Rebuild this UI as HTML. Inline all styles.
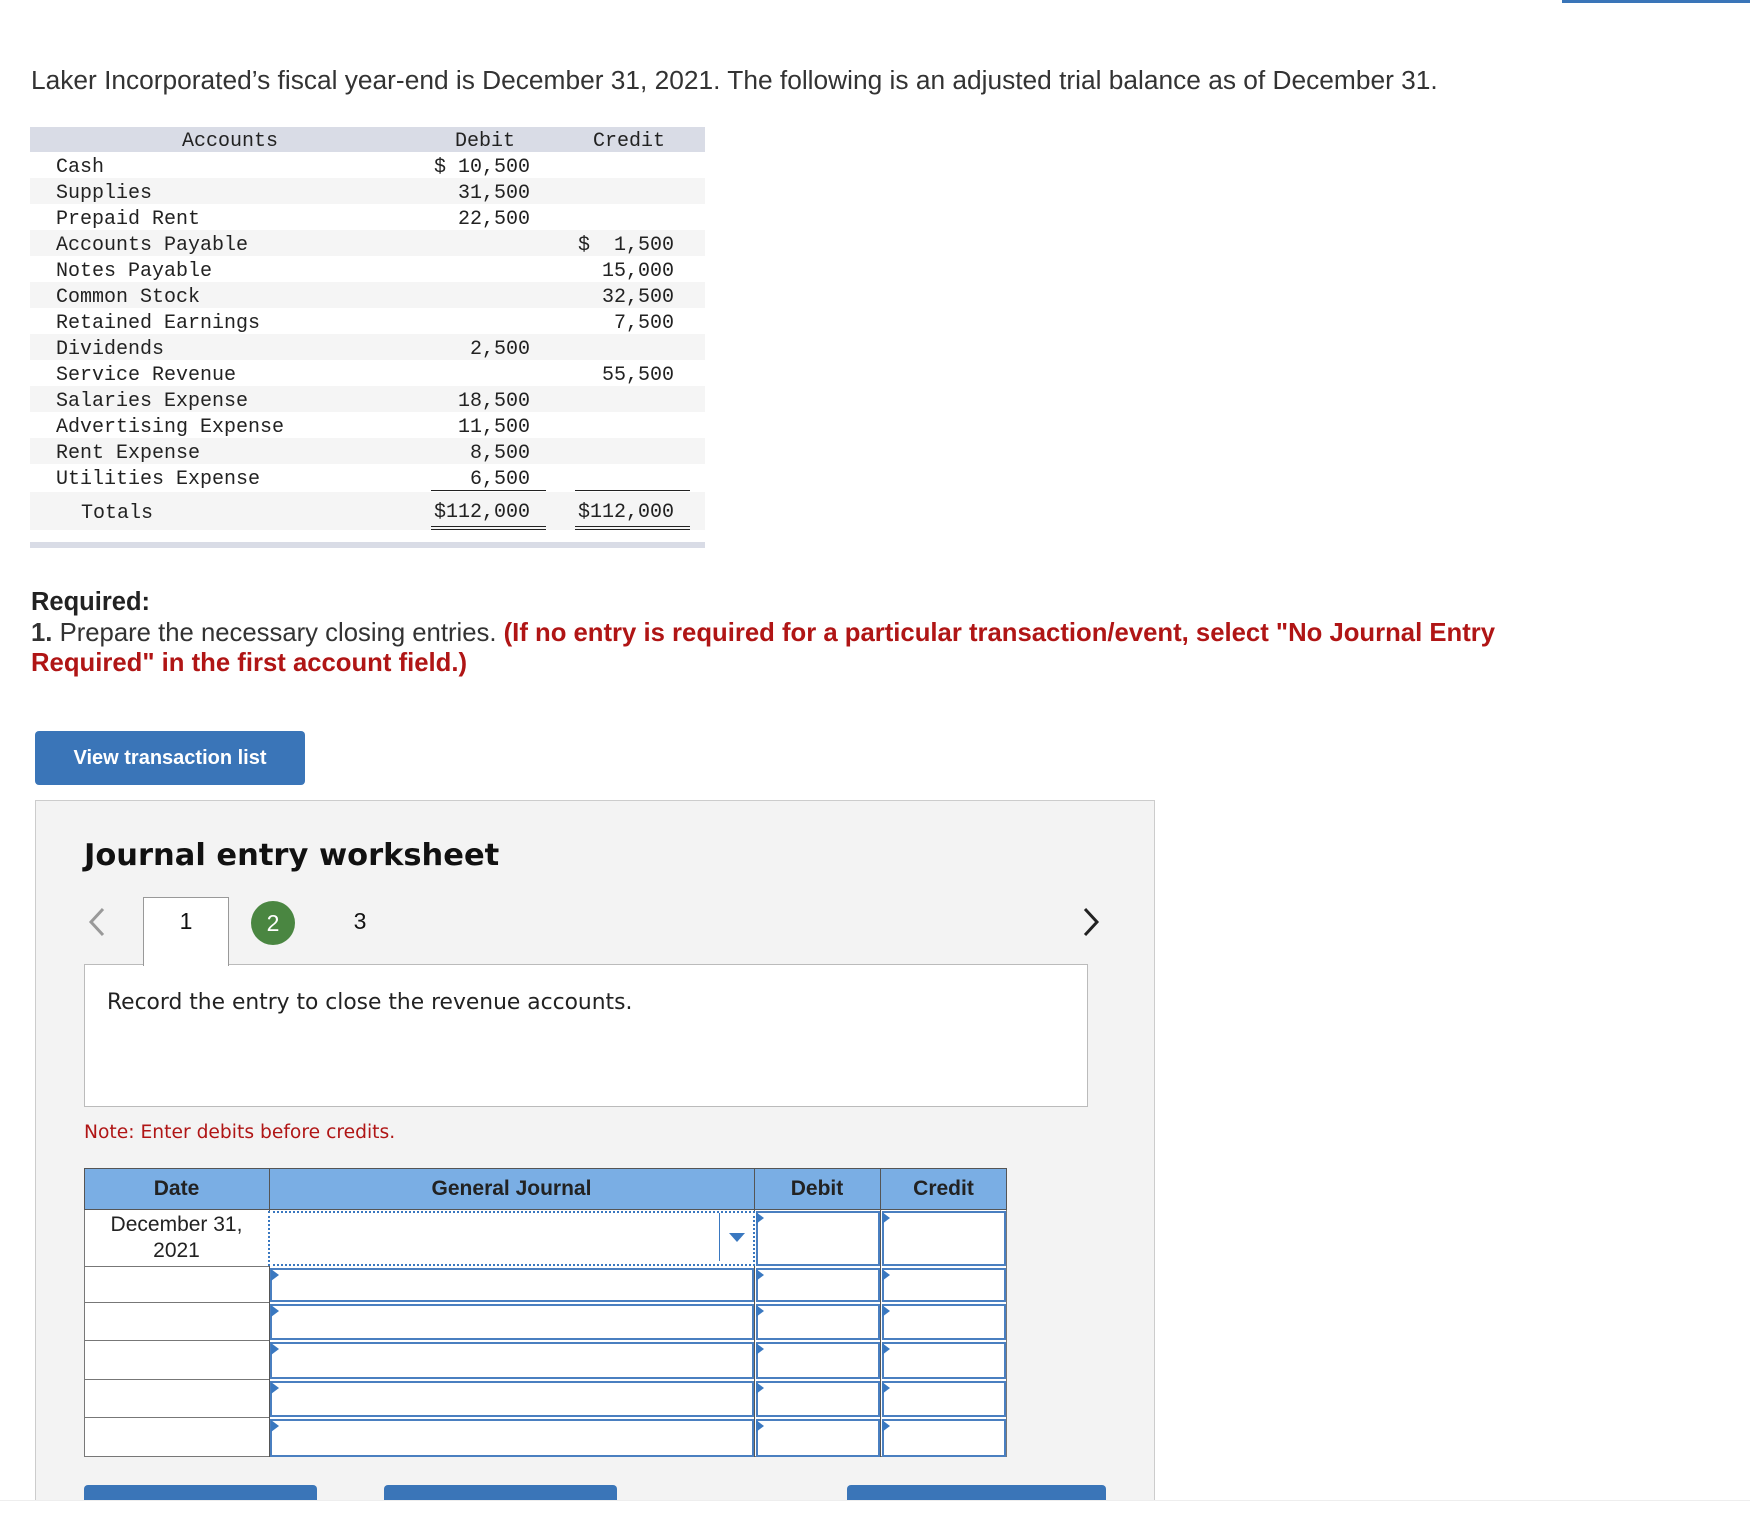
<!DOCTYPE html>
<html><head><meta charset="utf-8"><style>
*{margin:0;padding:0;box-sizing:border-box}
body{width:1750px;height:1516px;background:#fff;position:relative;font-family:"Liberation Sans",sans-serif;color:#222;overflow:hidden}
.a{position:absolute}
.mono{font-family:"Liberation Mono","DejaVu Sans Mono",monospace;font-size:20px;color:#222;white-space:pre}
.row{position:absolute;left:30px;width:675px;height:26px}
.sh{background:#f5f5f5}
.cell{position:absolute;border:2px solid #4a7fc0;background:#fff}
.tri{position:absolute;width:0;height:0;border-top:6px solid transparent;border-bottom:6px solid transparent;border-left:8px solid #3a78c0}
</style></head><body>
<div class="a" style="left:1562px;top:0;width:188px;height:3px;background:#3a75b8"></div>
<div class="a" style="left:31px;top:65px;font-size:26.3px;color:#333;white-space:nowrap">Laker Incorporated’s fiscal year-end is December 31, 2021. The following is an adjusted trial balance as of December 31.</div>

<div class="a" style="left:30px;top:127px;width:675px;height:25px;background:#d9dce6"></div>
<div class="a mono" style="left:182px;top:130px">Accounts</div>
<div class="a mono" style="left:455px;top:130px">Debit</div>
<div class="a mono" style="left:593px;top:130px">Credit</div>
<div class="row sh" style="top:178px"></div>
<div class="row sh" style="top:230px"></div>
<div class="row sh" style="top:282px"></div>
<div class="row sh" style="top:334px"></div>
<div class="row sh" style="top:386px"></div>
<div class="row sh" style="top:438px"></div>
<div class="row sh" style="top:492px;height:38px"></div>
<div class="a mono" style="left:56px;top:155px;line-height:26px">Cash
Supplies
Prepaid Rent
Accounts Payable
Notes Payable
Common Stock
Retained Earnings
Dividends
Service Revenue
Salaries Expense
Advertising Expense
Rent Expense
Utilities Expense</div>
<div class="a mono" style="left:400px;top:155px;line-height:26px;width:130px;text-align:right">$ 10,500
31,500
22,500




2,500

18,500
11,500
8,500
6,500</div>
<div class="a mono" style="left:544px;top:155px;line-height:26px;width:130px;text-align:right">


$  1,500
15,000
32,500
7,500

55,500</div>
<div class="a" style="left:431px;top:490px;width:115px;height:1px;background:#222"></div>
<div class="a" style="left:575px;top:490px;width:115px;height:1px;background:#222"></div>
<div class="a mono" style="left:81px;top:502px">Totals</div>
<div class="a mono" style="left:400px;top:501px;width:130px;text-align:right">$112,000</div>
<div class="a mono" style="left:544px;top:501px;width:130px;text-align:right">$112,000</div>
<div class="a" style="left:431px;top:526px;width:115px;height:4px;border-top:1px solid #222;border-bottom:1px solid #222"></div>
<div class="a" style="left:575px;top:526px;width:115px;height:4px;border-top:1px solid #222;border-bottom:1px solid #222"></div>
<div class="a" style="left:30px;top:542px;width:675px;height:6px;background:#d9dce6"></div>

<div class="a" style="left:31px;top:588px;font-size:25.5px;font-weight:bold;color:#222">Required:</div>
<div class="a" style="left:31px;top:618px;font-size:25.7px;color:#333;width:1600px;line-height:30px;white-space:nowrap"><b>1.</b> Prepare the necessary closing entries. <b style="color:#b01515">(If no entry is required for a particular transaction/event, select "No Journal Entry<br>Required" in the first account field.)</b></div>

<div class="a" style="left:35px;top:731px;width:270px;height:54px;background:#3a75b8;border-radius:4px;color:#fff;font-weight:bold;font-size:20px;text-align:center;line-height:54px">View transaction list</div>

<div class="a" style="left:35px;top:800px;width:1120px;height:700px;background:#f3f3f3;border:1px solid #ccc;border-bottom:none"></div>
<div class="a" style="left:84px;top:838px;font-family:'DejaVu Sans',sans-serif;font-weight:bold;font-size:30.5px;color:#111">Journal entry worksheet</div>
<svg class="a" style="left:86px;top:906px" width="22" height="32"><path d="M17 3 L5 16 L17 29" stroke="#999" stroke-width="3" fill="none"/></svg>
<svg class="a" style="left:1080px;top:906px" width="22" height="32"><path d="M5 3 L17 16 L5 29" stroke="#222" stroke-width="3" fill="none"/></svg>
<div class="a" style="left:84px;top:964px;width:1004px;height:143px;background:#fff;border:1px solid #bbb"></div>
<div class="a" style="left:143px;top:897px;width:86px;height:69px;background:#fff;border:1px solid #999;border-bottom:none"></div>
<div class="a" style="left:143px;top:908px;width:86px;text-align:center;font-size:23px;color:#111">1</div>
<div class="a" style="left:251px;top:901px;width:44px;height:44px;border-radius:50%;background:#4a8641;color:#fff;font-size:23px;text-align:center;line-height:44px">2</div>
<div class="a" style="left:340px;top:908px;width:40px;text-align:center;font-size:23px;color:#111">3</div>
<div class="a" style="left:107px;top:990px;font-family:'DejaVu Sans',sans-serif;font-size:21.8px;color:#222">Record the entry to close the revenue accounts.</div>
<div class="a" style="left:84px;top:1122px;font-family:'DejaVu Sans',sans-serif;font-size:18.7px;color:#b01515">Note: Enter debits before credits.</div>

<div class="a" style="left:84px;top:1168px;width:923px;height:289px;background:#fff;border:1px solid #777"></div>
<div class="a" style="left:84px;top:1168px;width:923px;height:42px;background:#7aaee4;border:1px solid #555"></div>
<div class="a" style="left:269px;top:1168px;width:1px;height:289px;background:#555"></div>
<div class="a" style="left:754px;top:1168px;width:1px;height:289px;background:#555"></div>
<div class="a" style="left:880px;top:1168px;width:1px;height:289px;background:#555"></div>
<div class="a" style="left:84px;top:1177px;width:185px;text-align:center;font-weight:bold;font-size:21px">Date</div>
<div class="a" style="left:269px;top:1177px;width:485px;text-align:center;font-weight:bold;font-size:21px">General Journal</div>
<div class="a" style="left:754px;top:1177px;width:126px;text-align:center;font-weight:bold;font-size:21px">Debit</div>
<div class="a" style="left:880px;top:1177px;width:127px;text-align:center;font-weight:bold;font-size:21px">Credit</div>
<div class="a" style="left:84px;top:1212px;width:185px;text-align:center;font-size:21px;line-height:26px">December 31,<br>2021</div>
<div class="a" style="left:84px;top:1266px;width:185px;height:1px;background:#777"></div>
<div class="a" style="left:84px;top:1302px;width:185px;height:1px;background:#777"></div>
<div class="a" style="left:84px;top:1340px;width:185px;height:1px;background:#777"></div>
<div class="a" style="left:84px;top:1379px;width:185px;height:1px;background:#777"></div>
<div class="a" style="left:84px;top:1417px;width:185px;height:1px;background:#777"></div>
<div class="a" style="left:268px;top:1211px;width:487px;height:55px;border:2px dotted #3a78c0;background:#fff"></div>
<div class="a" style="left:719px;top:1213px;width:1px;height:48px;background:#3a78c0"></div>
<div class="a" style="left:729px;top:1233px;width:0;height:0;border-left:8px solid transparent;border-right:8px solid transparent;border-top:9px solid #3a78c0"></div>
<div class="cell" style="left:756px;top:1211px;width:124px;height:55px"></div>
<div class="cell" style="left:882px;top:1211px;width:124px;height:55px"></div>
<div class="tri" style="left:756px;top:1212px"></div><div class="tri" style="left:882px;top:1212px"></div>

<div class="cell" style="left:270px;top:1268px;width:484px;height:34px"></div><div class="cell" style="left:756px;top:1268px;width:124px;height:34px"></div><div class="cell" style="left:882px;top:1268px;width:124px;height:34px"></div>
<div class="tri" style="left:271px;top:1269px"></div><div class="tri" style="left:756px;top:1269px"></div><div class="tri" style="left:882px;top:1269px"></div>
<div class="cell" style="left:270px;top:1304px;width:484px;height:36px"></div><div class="cell" style="left:756px;top:1304px;width:124px;height:36px"></div><div class="cell" style="left:882px;top:1304px;width:124px;height:36px"></div>
<div class="tri" style="left:271px;top:1305px"></div><div class="tri" style="left:756px;top:1305px"></div><div class="tri" style="left:882px;top:1305px"></div>
<div class="cell" style="left:270px;top:1342px;width:484px;height:37px"></div><div class="cell" style="left:756px;top:1342px;width:124px;height:37px"></div><div class="cell" style="left:882px;top:1342px;width:124px;height:37px"></div>
<div class="tri" style="left:271px;top:1343px"></div><div class="tri" style="left:756px;top:1343px"></div><div class="tri" style="left:882px;top:1343px"></div>
<div class="cell" style="left:270px;top:1381px;width:484px;height:36px"></div><div class="cell" style="left:756px;top:1381px;width:124px;height:36px"></div><div class="cell" style="left:882px;top:1381px;width:124px;height:36px"></div>
<div class="tri" style="left:271px;top:1382px"></div><div class="tri" style="left:756px;top:1382px"></div><div class="tri" style="left:882px;top:1382px"></div>
<div class="cell" style="left:270px;top:1419px;width:484px;height:38px"></div><div class="cell" style="left:756px;top:1419px;width:124px;height:38px"></div><div class="cell" style="left:882px;top:1419px;width:124px;height:38px"></div>
<div class="tri" style="left:271px;top:1420px"></div><div class="tri" style="left:756px;top:1420px"></div><div class="tri" style="left:882px;top:1420px"></div>

<div class="a" style="left:84px;top:1485px;width:233px;height:15px;background:#3a75b8;border-radius:4px 4px 0 0"></div>
<div class="a" style="left:384px;top:1485px;width:233px;height:15px;background:#3a75b8;border-radius:4px 4px 0 0"></div>
<div class="a" style="left:847px;top:1485px;width:259px;height:15px;background:#3a75b8;border-radius:4px 4px 0 0"></div>
<div class="a" style="left:0;top:1500px;width:1750px;height:16px;background:#fff;border-top:1px solid #eee"></div>
</body></html>
